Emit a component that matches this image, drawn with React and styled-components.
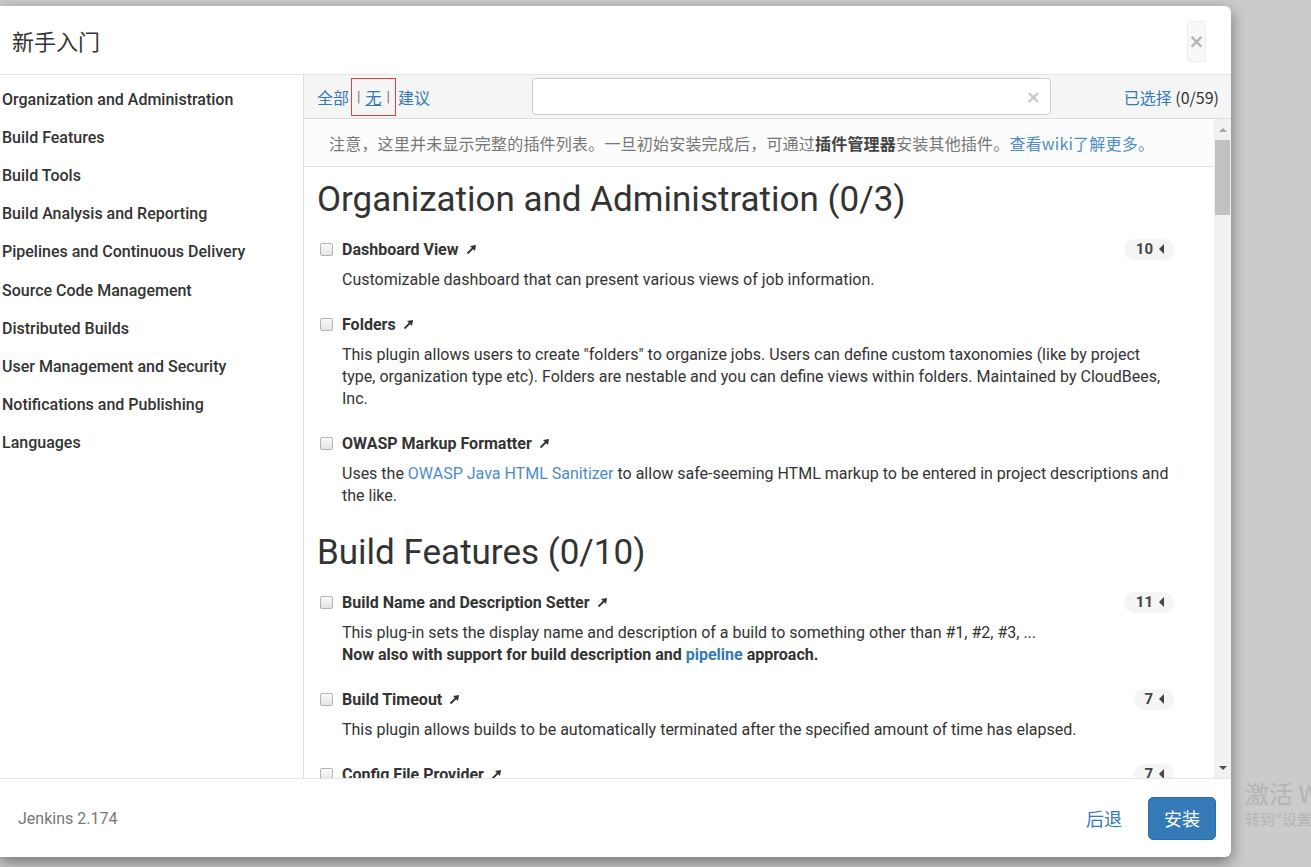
import React from 'react'
import styled, { createGlobalStyle } from 'styled-components'

const GlobalStyle = createGlobalStyle`
  html, body {
    margin: 0;
    padding: 0;
    background: #cbcbcb;
    overflow: hidden;
  }
  body {
    font-family: Roboto, "Noto Sans CJK SC", sans-serif;
    color: #333;
  }
`

const Page = styled.div`
  position: relative;
  width: 1311px;
  height: 867px;
  overflow: hidden;
`

const Modal = styled.div`
  width: 1231px;
  height: 851px;
  margin-top: 6px;
  background: #fff;
  border-radius: 0 6px 6px 0;
  box-shadow: 0 5px 15px rgba(0, 0, 0, 0.45);
  display: flex;
  flex-direction: column;
  overflow: hidden;
`

const Header = styled.div`
  height: 68px;
  flex: none;
  display: flex;
  align-items: center;
  justify-content: space-between;
  padding: 0 25px 0 12px;
  border-bottom: 1px solid #e5e5e5;
`

const Title = styled.h4`
  margin: 0;
  font-size: 22px;
  font-weight: 400;
  color: #333;
  font-family: "Noto Sans CJK SC", sans-serif;
`

const CloseButton = styled.button`
  width: 19px;
  height: 41px;
  padding: 0;
  border: 1px solid #eee;
  border-radius: 2px;
  background: #f8f8f8;
  color: #b5b5b5;
  font-family: "DejaVu Sans", sans-serif;
  font-size: 19px;
  font-weight: 700;
  line-height: 1;
  margin-top: 2px;
`

const Body = styled.div`
  flex: 1;
  display: flex;
  min-height: 0;
`

const Sidebar = styled.ul`
  width: 301px;
  flex: none;
  margin: 0;
  padding: 5px 0 0 2px;
  list-style: none;
  border-right: 1px solid #ddd;
  box-sizing: content-box;
`

const NavItem = styled.li`
  height: 38.2px;
  display: flex;
  align-items: center;
  font-size: 16px;
  font-weight: 500;
  color: #333;
  white-space: nowrap;
`

const Main = styled.div`
  flex: 1;
  display: flex;
  flex-direction: column;
  min-width: 0;
`

const Toolbar = styled.div`
  height: 43px;
  flex: none;
  display: flex;
  align-items: center;
  padding: 0 12px 0 13px;
  background: #f5f5f5;
  border-bottom: 1px solid #ddd;
  font-size: 16px;
`

const Filters = styled.div`
  display: flex;
  align-items: center;
  font-family: "Noto Sans CJK SC", sans-serif;
`

const Link = styled.a`
  color: ${p => p.$light ? '#4d8cc9' : '#337ab7'};
  text-decoration: ${p => p.$underline ? 'underline' : 'none'};
  cursor: pointer;
`

const Sep = styled.span`
  color: #777;
  font-size: 14px;
  margin: 0 5px;
  font-family: Roboto, sans-serif;
`

const Marked = styled.span`
  display: inline-flex;
  align-items: center;
  height: 36px;
  padding: 0;
  border: 1px solid #e0403f;
  margin: 0 2px;
`

const Search = styled.div`
  width: 519px;
  height: 37px;
  margin-left: 102px;
  border: 1px solid #ccc;
  border-radius: 4px;
  background: #fff;
  display: flex;
  align-items: center;
  justify-content: flex-end;
  padding-right: 9px;
  box-sizing: border-box;
  color: #c8c8c8;
  font-family: "DejaVu Sans", sans-serif;
  font-size: 18px;
  font-weight: 700;
`

const Selected = styled.div`
  margin-left: auto;
  color: #333;
  font-family: "Noto Sans CJK SC", sans-serif;
`

const ScrollArea = styled.div`
  flex: 1;
  display: flex;
  min-height: 0;
  overflow: hidden;
`

const Content = styled.div`
  flex: 1;
  min-width: 0;
`

const Note = styled.div`
  height: 47px;
  display: flex;
  align-items: center;
  padding-left: 25px;
  background: #fcfcfc;
  border-bottom: 1px solid #e3e3e3;
  color: #777;
  font-size: 16px;
  letter-spacing: 0.2px;
  font-family: "Noto Sans CJK SC", sans-serif;
  white-space: nowrap;

  b {
    color: #444;
  }
`

const List = styled.div`
  padding: 9px 27px 0 13px;
`

const SectionTitle = styled.h2`
  margin: 4px 0 18px;
  font-size: 35px;
  line-height: 40px;
  font-weight: 400;
  color: #333;
`

const Plugin = styled.div`
  padding: 0 0 22px 3px;
`

const PluginHead = styled.div`
  display: flex;
  align-items: center;
  height: 22px;
`

const Check = styled.span`
  width: 11px;
  height: 11px;
  border: 1px solid #b4b4b4;
  border-radius: 2px;
  background: linear-gradient(#fafafa, #e4e4e4);
  margin-right: 9px;
  flex: none;
`

const PluginName = styled.span`
  font-size: 16px;
  font-weight: 700;
  color: #333;
`

const Arrow = styled.svg`
  margin-left: 7px;
  width: 11px;
  height: 11px;
`

const Badge = styled.span`
  margin: 0 13px 0 auto;
  height: 21px;
  padding: 0 10px 0 ${p => p.$wide ? 12 : 10}px;
  border-radius: 11px;
  background: #f5f5f5;
  display: inline-flex;
  align-items: center;
  gap: 6px;
  font-size: 15px;
  font-weight: 700;
  color: #444;
`

const Caret = styled.span`
  width: 0;
  height: 0;
  border-top: 5px solid transparent;
  border-bottom: 5px solid transparent;
  border-right: 5px solid #444;
`

const Desc = styled.div`
  margin: 9px 0 0 22px;
  font-size: 16px;
  line-height: 22px;
  color: #333;
  white-space: nowrap;

  b {
    font-weight: 700;
  }
`

const Scrollbar = styled.div`
  width: 17px;
  flex: none;
  background: #f1f1f1;
  display: flex;
  flex-direction: column;
  align-items: center;
`

const ScrollArrow = styled.span`
  height: 21px;
  display: flex;
  align-items: center;
  justify-content: center;

  &::before {
    content: '';
    border-left: 4px solid transparent;
    border-right: 4px solid transparent;
    ${p => p.$down ? 'border-top: 4px solid #505050;' : 'border-bottom: 4px solid #a3a3a3;'}
  }
`

const Thumb = styled.div`
  width: 15px;
  height: 75px;
  background: #c1c1c1;
`

const Spacer = styled.div`
  flex: 1;
`

const Footer = styled.div`
  height: 78px;
  flex: none;
  display: flex;
  align-items: center;
  padding: 0 15px 0 18px;
  border-top: 1px solid #e5e5e5;
`

const Version = styled.span`
  color: #777;
  font-size: 16px;
`

const BackLink = styled.a`
  margin-left: auto;
  margin-right: 26px;
  color: #337ab7;
  font-size: 18px;
  font-family: "Noto Sans CJK SC", sans-serif;
`

const InstallButton = styled.button`
  width: 68px;
  height: 43px;
  border: 1px solid #2e6da4;
  border-radius: 5px;
  background: #337ab7;
  color: #fff;
  font-size: 18px;
  font-family: "Noto Sans CJK SC", sans-serif;
  padding: 0;
`

const Watermark = styled.div`
  position: absolute;
  left: 1245px;
  top: 777px;
  color: #b5b5b5;
  font-family: "Noto Sans CJK SC", sans-serif;
  white-space: nowrap;
  pointer-events: none;
`

const WatermarkTitle = styled.div`
  font-size: 24px;
  line-height: 32px;
`

const WatermarkHint = styled.div`
  font-size: 15px;
  line-height: 20px;
`

const categories = [
  'Organization and Administration',
  'Build Features',
  'Build Tools',
  'Build Analysis and Reporting',
  'Pipelines and Continuous Delivery',
  'Source Code Management',
  'Distributed Builds',
  'User Management and Security',
  'Notifications and Publishing',
  'Languages',
]

const ExtArrow = () => (
  <Arrow viewBox="0 0 11 11">
    <path d="M1.5 9.5 L7.5 3.5" stroke="#333" strokeWidth="1.8" />
    <path d="M4 2 L10 1 L9 7 Z" fill="#333" />
  </Arrow>
)

const PluginItem = ({ name, count, children }) => (
  <Plugin>
    <PluginHead>
      <Check />
      <PluginName>{name}</PluginName>
      <ExtArrow />
      {count && (
        <Badge $wide={count.length > 1}>
          {count}
          <Caret />
        </Badge>
      )}
    </PluginHead>
    {children && <Desc>{children}</Desc>}
  </Plugin>
)

const App = () => {
  return (
    <Page>
      <GlobalStyle />
      <Modal>
        <Header>
          <Title>新手入门</Title>
          <CloseButton>×</CloseButton>
        </Header>
        <Body>
          <Sidebar>
            {categories.map(c => (
              <NavItem key={c}>{c}</NavItem>
            ))}
          </Sidebar>
          <Main>
            <Toolbar>
              <Filters>
                <Link>全部</Link>
                <Marked>
                  <Sep>|</Sep>
                  <Link $underline>无</Link>
                  <Sep>|</Sep>
                </Marked>
                <Link>建议</Link>
              </Filters>
              <Search>×</Search>
              <Selected>
                <Link>已选择</Link> (0/59)
              </Selected>
            </Toolbar>
            <ScrollArea>
              <Content>
                <Note>
                  注意，这里并未显示完整的插件列表。一旦初始安装完成后，可通过<b>插件管理器</b>安装其他插件。<Link $light>查看wiki了解更多。</Link>
                </Note>
                <List>
                  <SectionTitle>Organization and Administration (0/3)</SectionTitle>
                  <PluginItem name="Dashboard View" count="10">
                    Customizable dashboard that can present various views of job information.
                  </PluginItem>
                  <PluginItem name="Folders">
                    This plugin allows users to create "folders" to organize jobs. Users can define custom taxonomies (like by project<br />
                    type, organization type etc). Folders are nestable and you can define views within folders. Maintained by CloudBees,<br />
                    Inc.
                  </PluginItem>
                  <PluginItem name="OWASP Markup Formatter">
                    Uses the <Link $light>OWASP Java HTML Sanitizer</Link> to allow safe-seeming HTML markup to be entered in project descriptions and<br />
                    the like.
                  </PluginItem>
                  <SectionTitle>Build Features (0/10)</SectionTitle>
                  <PluginItem name="Build Name and Description Setter" count="11">
                    This plug-in sets the display name and description of a build to something other than #1, #2, #3, ...<br />
                    <b>Now also with support for build description and <Link>pipeline</Link> approach.</b>
                  </PluginItem>
                  <PluginItem name="Build Timeout" count="7">
                    This plugin allows builds to be automatically terminated after the specified amount of time has elapsed.
                  </PluginItem>
                  <PluginItem name="Config File Provider" count="7" />
                </List>
              </Content>
              <Scrollbar>
                <ScrollArrow />
                <Thumb />
                <Spacer />
                <ScrollArrow $down />
              </Scrollbar>
            </ScrollArea>
          </Main>
        </Body>
        <Footer>
          <Version>Jenkins 2.174</Version>
          <BackLink>后退</BackLink>
          <InstallButton>安装</InstallButton>
        </Footer>
      </Modal>
      <Watermark>
        <WatermarkTitle>激活 Windows</WatermarkTitle>
        <WatermarkHint>转到"设置"以激活 Windows。</WatermarkHint>
      </Watermark>
    </Page>
  )
}

export default App
